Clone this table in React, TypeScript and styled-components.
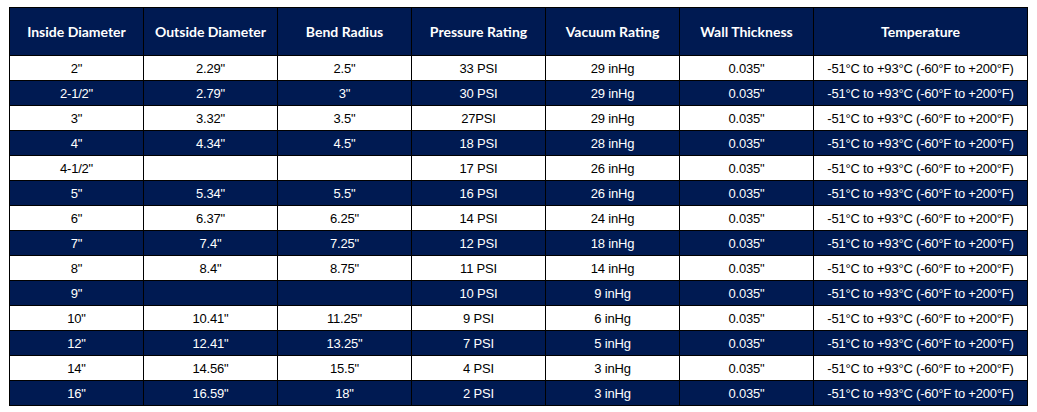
import React from "react";
import styled, { createGlobalStyle } from "styled-components";

const Global = createGlobalStyle`
  html, body { margin: 0; padding: 0; background: #ffffff; }
`;

const Page = styled.div`
  padding: 7px 0 0 9px;
`;

const Table = styled.table`
  border-collapse: collapse;
  table-layout: fixed;
  border: 1px solid #000;
`;

const HeadCell = styled.th<{ $w: number }>`
  width: ${(p) => p.$w}px;
  height: 47px;
  padding: 0;
  background: #001a52;
  color: #ffffff;
  font-family: "Lato", "Noto Sans", sans-serif;
  font-weight: 700;
  font-size: 14px;
  text-align: center;
  vertical-align: middle;
  border: 1px solid #000;
`;

const Cell = styled.td<{ $dark: boolean }>`
  height: 24px;
  padding: 0;
  background: ${(p) => (p.$dark ? "#001a52" : "#ffffff")};
  color: ${(p) => (p.$dark ? "#ffffff" : "#000000")};
  font-family: "Liberation Sans", Arial, sans-serif;
  font-size: 13px;
  letter-spacing: -0.2px;
  text-align: center;
  vertical-align: middle;
  border: 1px solid #000;
  white-space: nowrap;
`;

const headers = [
  "Inside Diameter",
  "Outside Diameter",
  "Bend Radius",
  "Pressure Rating",
  "Vacuum Rating",
  "Wall Thickness",
  "Temperature",
];
const widths = [133, 133, 133, 133, 133, 133, 213];

const temp = "-51°C to +93°C (-60°F to +200°F)";
const rows: string[][] = [
  ['2"', '2.29"', '2.5"', "33 PSI", "29 inHg"],
  ['2-1/2"', '2.79"', '3"', "30 PSI", "29 inHg"],
  ['3"', '3.32"', '3.5"', "27PSI", "29 inHg"],
  ['4"', '4.34"', '4.5"', "18 PSI", "28 inHg"],
  ['4-1/2"', "", "", "17 PSI", "26 inHg"],
  ['5"', '5.34"', '5.5"', "16 PSI", "26 inHg"],
  ['6"', '6.37"', '6.25"', "14 PSI", "24 inHg"],
  ['7"', '7.4"', '7.25"', "12 PSI", "18 inHg"],
  ['8"', '8.4"', '8.75"', "11 PSI", "14 inHg"],
  ['9"', "", "", "10 PSI", "9 inHg"],
  ['10"', '10.41"', '11.25"', "9 PSI", "6 inHg"],
  ['12"', '12.41"', '13.25"', "7 PSI", "5 inHg"],
  ['14"', '14.56"', '15.5"', "4 PSI", "3 inHg"],
  ['16"', '16.59"', '18"', "2 PSI", "3 inHg"],
];

export default function App() {
  return (
    <Page>
      <Global />
      <Table>
        <thead>
          <tr>
            {headers.map((h, i) => (
              <HeadCell key={h} $w={widths[i]}>
                {h}
              </HeadCell>
            ))}
          </tr>
        </thead>
        <tbody>
          {rows.map((r, ri) => {
            const dark = ri % 2 === 1;
            return (
              <tr key={ri}>
                {[...r, '0.035"', temp].map((c, ci) => (
                  <Cell key={ci} $dark={dark}>
                    {c}
                  </Cell>
                ))}
              </tr>
            );
          })}
        </tbody>
      </Table>
    </Page>
  );
}
